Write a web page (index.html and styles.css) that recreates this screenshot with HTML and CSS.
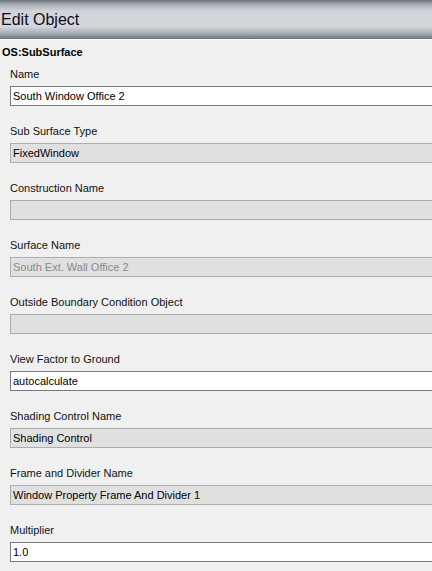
FILE: index.html
```html
<!DOCTYPE html>
<html lang="en">
<head>
    <meta charset="UTF-8">
    <meta name="viewport" content="width=device-width, initial-scale=1.0">
    <title>Edit Object</title>
    <link rel="stylesheet" href="styles.css">
</head>
<body>

<div class="header">
    <h1>Edit Object</h1>
</div>

<div class="inspector">
    <h2 class="object-type">OS:SubSurface</h2>

    <!-- Editable and read-only fields of the object -->
    <div class="field">
        <label>Name</label>
        <div class="box editable">South Window Office 2</div>
    </div>

    <div class="field">
        <label>Sub Surface Type</label>
        <div class="box locked">FixedWindow</div>
    </div>

    <div class="field">
        <label>Construction Name</label>
        <div class="box locked"></div>
    </div>

    <div class="field">
        <label>Surface Name</label>
        <div class="box locked muted">South Ext. Wall Office 2</div>
    </div>

    <div class="field">
        <label>Outside Boundary Condition Object</label>
        <div class="box locked"></div>
    </div>

    <div class="field">
        <label>View Factor to Ground</label>
        <div class="box editable">autocalculate</div>
    </div>

    <div class="field">
        <label>Shading Control Name</label>
        <div class="box locked">Shading Control</div>
    </div>

    <div class="field">
        <label>Frame and Divider Name</label>
        <div class="box locked">Window Property Frame And Divider 1</div>
    </div>

    <div class="field">
        <label>Multiplier</label>
        <div class="box editable">1.0</div>
    </div>
</div>

</body>
</html>
```

FILE: styles.css
```css
body {
    font-family: 'Liberation Sans', Arial, sans-serif;
    background-color: #f0f0f0;
    margin: 0;
    padding: 0;
    overflow: hidden;
    color: #000;
}

.header {
    height: 39px;
    background: linear-gradient(to bottom, #6b727b 0%, #a9aeb4 12%, #d0d4d8 28%, #d3d6da 68%, #a7acb2 86%, #6a717b 100%);
    border-bottom: 1px solid #fafafa;
    display: flex;
    align-items: center;
}

h1 {
    margin: 0;
    padding-left: 1px;
    font-size: 16px;
    font-weight: normal;
    color: #0d0d20;
}

.inspector {
    display: flex;
    flex-direction: column;
    gap: 17px;
    padding: 4px 0 0 10px;
}

.object-type {
    margin: 0 0 -11px -8px;
    font-size: 11px;
    line-height: 16px;
    font-weight: bold;
}

.field {
    display: flex;
    flex-direction: column;
    gap: 4px;
}

label {
    font-size: 11px;
    line-height: 16px;
    color: #101010;
}

.box {
    height: 18px;
    padding-left: 2px;
    font-size: 11px;
    line-height: 18px;
    color: #000;
    border-right: none !important;
}

.editable {
    background-color: #fff;
    border: 1px solid #7a7a7a;
}

.locked {
    background-color: #e0e0e0;
    border: 1px solid #adadad;
}

.muted {
    color: #8a8a8a;
}
```
